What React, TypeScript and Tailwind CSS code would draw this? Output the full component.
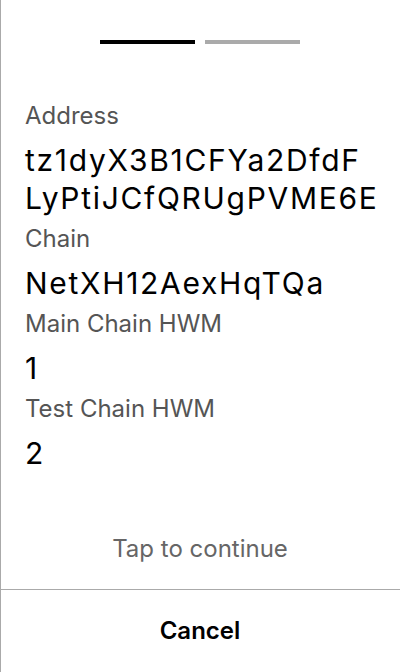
import React from "react";

const fields = [
  { label: "Address", lines: ["tz1dyX3B1CFYa2DfdF", "LyPtiJCfQRUgPVME6E"] },
  { label: "Chain", lines: ["NetXH12AexHqTQa"] },
  { label: "Main Chain HWM", lines: ["1"] },
  { label: "Test Chain HWM", lines: ["2"] },
];

export default function App() {
  return (
    <div className="w-[400px] h-[672px] bg-white shadow-[inset_1px_0_0_#aaaaaa] flex flex-col font-['Inter',sans-serif]">
      <div className="flex-1 flex flex-col">
        {/* Pager */}
        <div className="flex justify-center gap-[10px] pt-[40px]">
          <div className="w-[95px] h-[4px] bg-black" />
          <div className="w-[95px] h-[4px] bg-[#aaaaaa]" />
        </div>

        <div className="pl-[25px] pr-[24px] pt-[57px] flex flex-col">
          {fields.map((f) => (
            <div key={f.label} className="flex flex-col mb-[7px]">
              <div className="text-[24px] leading-[30px] text-[#555555]">{f.label}</div>
              <div className="mt-[10px] flex flex-col">
                {f.lines.map((l) => (
                  <span key={l} className="text-[30px] leading-[38px] tracking-[1.7px] text-black whitespace-nowrap">
                    {l}
                  </span>
                ))}
              </div>
            </div>
          ))}
        </div>

        <div className="mt-auto pb-[25px] text-center text-[24px] leading-[30px] text-[#666666]">Tap to continue</div>
      </div>

      <button className="h-[83px] border-t border-[#aaaaaa] text-[24px] font-semibold text-black">Cancel</button>
    </div>
  );
}
